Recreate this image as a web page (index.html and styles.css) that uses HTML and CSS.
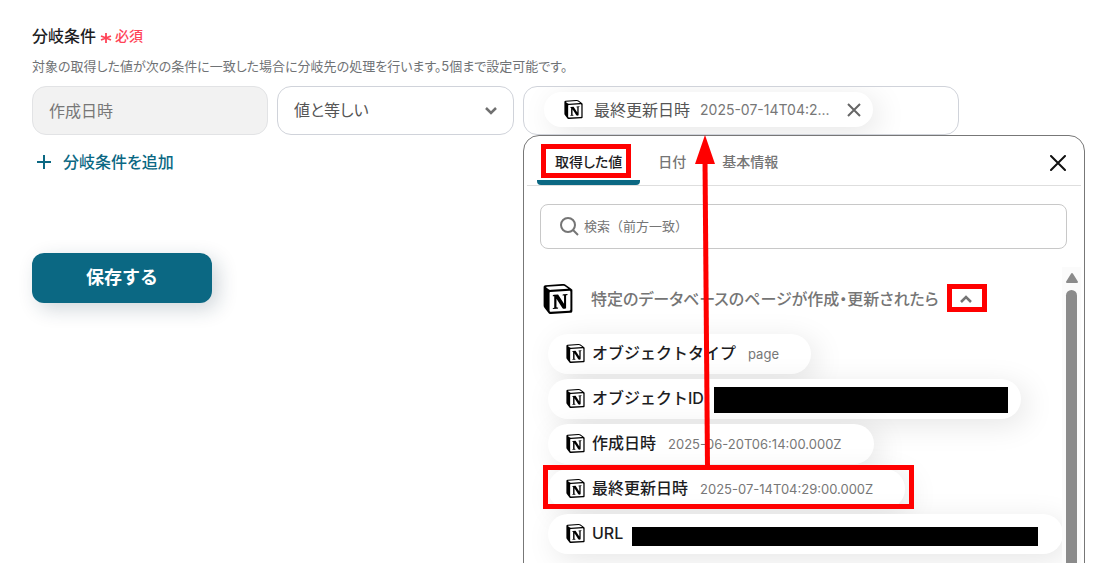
FILE: index.html
```html
<!DOCTYPE html>
<html lang="ja">
<head>
<meta charset="utf-8">
<meta name="viewport" content="width=device-width, initial-scale=1">
<title>分岐条件</title>
<link rel="stylesheet" href="styles.css">
</head>
<body>
<svg class="sprite" aria-hidden="true">
  <symbol id="notion" viewBox="0 0 24 24">
    <path fill="#fff" d="M1 2L17 1l6 4v17L6 23l-5-6z"/>
    <path d="M4.459 4.208c.746.606 1.026.56 2.428.466l13.215-.793c.28 0 .047-.28-.046-.326L17.86 1.968c-.42-.326-.981-.7-2.055-.607L3.01 2.295c-.466.046-.56.28-.374.466zm.793 3.08v13.904c0 .747.373 1.027 1.214.98l14.523-.84c.841-.046.935-.56.935-1.167V6.354c0-.606-.233-.933-.748-.887l-15.177.887c-.56.047-.747.327-.747.933zm14.337.745c.093.42 0 .84-.42.888l-.7.14v10.264c-.608.327-1.168.514-1.635.514-.748 0-.935-.234-1.495-.933l-4.577-7.186v6.952L12.21 19s0 .84-1.168.84l-3.222.186c-.093-.186 0-.653.327-.746l.84-.233V9.854L7.822 9.76c-.094-.42.14-1.026.793-1.073l3.456-.233 4.764 7.279v-6.44l-1.215-.139c-.093-.514.28-.887.747-.933zM1.936 1.035l13.31-.98c1.634-.14 2.055-.047 3.082.7l4.249 2.986c.7.513.934.653.934 1.213v16.378c0 1.026-.373 1.634-1.68 1.726l-15.458.934c-.98.047-1.448-.093-1.962-.747l-3.129-4.06c-.56-.747-.793-1.306-.793-1.96V2.667c0-.839.374-1.54 1.447-1.632z"/>
  </symbol>
</svg>
<main class="page">
  <form class="form">
    <header class="form-head">
      <h1 class="title">分岐条件</h1>
      <span class="required"><svg class="asterisk" viewBox="0 0 12 12" aria-hidden="true"><path d="M6 1v10M1 4l10 4M11 4L1 8"/></svg>必須</span>
    </header>
    <p class="help">対象の取得した値が次の条件に一致した場合に分岐先の処理を行います。5個まで設定可能です。</p>

    <div class="condition">
      <input class="field field-source" type="text" value="作成日時" aria-label="対象の値" disabled>
      <div class="select-wrap">
        <select class="field field-operator" aria-label="条件"><option>値と等しい</option></select>
        <svg class="select-arrow" viewBox="0 0 14 10" aria-hidden="true"><path d="M2 2l5 5 5-5"/></svg>
      </div>
      <div class="value-wrap">
        <div class="field field-value">
          <div class="token">
            <svg class="logo"><use href="#notion"/></svg>
            <span class="token-name">最終更新日時</span>
            <span class="token-value">2025-07-14T04:2...</span>
            <button class="icon-button token-remove" type="button" aria-label="値を削除"><svg viewBox="0 0 14 14"><path d="M1 1l12 12M13 1L1 13"/></svg></button>
          </div>
        </div>

        <section class="picker" aria-label="値を選択">
          <div class="picker-head">
            <div class="tabs" role="tablist">
              <button class="tab tab-active" type="button" role="tab" aria-selected="true">取得した値</button>
              <button class="tab" type="button" role="tab" aria-selected="false">日付</button>
              <button class="tab" type="button" role="tab" aria-selected="false">基本情報</button>
            </div>
            <button class="icon-button picker-close" type="button" aria-label="閉じる"><svg viewBox="0 0 16 16"><path d="M1 1l14 14M15 1L1 15"/></svg></button>
          </div>
          <label class="search">
            <svg class="search-icon" viewBox="0 0 20 20" aria-hidden="true"><circle cx="9" cy="9" r="7"/><path d="M14 14l5 5"/></svg>
            <input class="search-input" type="text" placeholder="検索（前方一致）" aria-label="検索（前方一致）">
          </label>
          <div class="results">
            <div class="list">
              <div class="group">
                <svg class="logo logo-large"><use href="#notion"/></svg>
                <h2 class="group-name">特定のデータベースのページが作成・更新されたら</h2>
                <button class="icon-button group-toggle" type="button" aria-label="折りたたむ"><svg viewBox="0 0 14 10"><path d="M2 8l5-5 5 5"/></svg></button>
              </div>
              <div class="chips">
                <button class="chip" type="button"><svg class="logo"><use href="#notion"/></svg><span class="chip-name">オブジェクトタイプ</span><span class="chip-value">page</span></button>
                <button class="chip chip-id" type="button"><svg class="logo"><use href="#notion"/></svg><span class="chip-name">オブジェクトID</span><span class="mask mask-id"></span></button>
                <button class="chip" type="button"><svg class="logo"><use href="#notion"/></svg><span class="chip-name">作成日時</span><span class="chip-value">2025-06-20T06:14:00.000Z</span></button>
                <button class="chip" type="button"><svg class="logo"><use href="#notion"/></svg><span class="chip-name">最終更新日時</span><span class="chip-value">2025-07-14T04:29:00.000Z</span></button>
                <button class="chip chip-url" type="button"><svg class="logo"><use href="#notion"/></svg><span class="chip-name">URL</span><span class="mask mask-url"></span></button>
              </div>
            </div>
            <div class="scrollbar" aria-hidden="true">
              <svg class="scroll-up" viewBox="0 0 14 12"><path d="M7 2l5 8H2z"/></svg>
              <div class="thumb"></div>
            </div>
          </div>
        </section>
      </div>
    </div>

    <button class="add" type="button"><svg class="plus" viewBox="0 0 16 16" aria-hidden="true"><path d="M8 1v14M1 8h14"/></svg>分岐条件を追加</button>
    <button class="save" type="submit">保存する</button>
  </form>

  <svg class="annotations" viewBox="0 0 1113 563" aria-hidden="true">
    <g class="frames">
      <path d="M543.5 146.500h85v29h-85z"/>
      <path d="M949.5 286.500h35v23h-35z"/>
      <path d="M545.5 467.500h366v39h-366z"/>
    </g>
    <path class="shaft" d="M705 160L707.500 467"/>
    <path class="head" d="M705 135l10 29h-20z"/>
  </svg>
</main>
</body>
</html>
```
FILE: styles.css
```css
* { box-sizing: border-box; }
body {
  margin: 0;
  background: #fff;
  color: #1d1d1f;
  font-family: Inter, "Noto Sans CJK JP", sans-serif;
  font-size: 16px;
  line-height: 24px;
  font-feature-settings: "palt";
}
h1, h2, p { margin: 0; }
button, input, select {
  font: inherit;
  font-feature-settings: inherit;
  color: inherit;
}
button { padding: 0; border: 0; background: none; cursor: pointer; }
svg { display: block; flex: none; fill: none; }
.sprite { position: absolute; width: 0; height: 0; }
.page {
  position: relative;
  min-height: 100vh;
  padding: 24px 32px;
  overflow: hidden;
}
.form { max-width: 927px; }
.form-head { display: flex; align-items: center; gap: 4px; }
.title { font-size: 16px; font-weight: 500; }
.required {
  display: flex;
  align-items: center;
  gap: 3px;
  color: #ff4458;
  font-size: 14px;
  font-weight: 500;
}
.asterisk { width: 12px; height: 12px; margin-top: 4px; stroke: currentColor; stroke-width: 1.800; }
.help { margin-top: 8px; color: #6f7275; font-size: 13px; line-height: 20px; }

.condition {
  display: grid;
  grid-template-columns: 236fr 237fr 436fr;
  gap: 9px;
  margin-top: 10px;
}
.field {
  width: 100%;
  height: 49px;
  padding: 0 16px 2px;
  border: 1px solid #d0d3da;
  border-radius: 14px;
  background: #fff;
  color: #555;
}
.field-source { border-color: #e2e3e5; background: #f2f2f2; color: #777; }
.select-wrap, .value-wrap { position: relative; }
.field-operator { appearance: none; }
.select-arrow {
  position: absolute;
  top: 20px;
  right: 16px;
  width: 14px;
  height: 10px;
  stroke: #707070;
  stroke-width: 2.500;
  pointer-events: none;
}
.field-value { display: flex; align-items: center; padding: 0 20px 2px; overflow: hidden; }
.token {
  display: flex;
  align-items: center;
  height: 35px;
  padding: 0 12px 0 20px;
  border-radius: 18px;
  background: #fff;
  box-shadow: 6px 6px 30px rgba(0, 0, 0, .1);
}
.logo { width: 19px; height: 19px; fill: #000; }
.token-name { margin-left: 11px; }
.token-value { margin-left: 10px; color: #777; font-size: 14px; }
.icon-button { display: grid; place-items: center; }
.token-remove { margin-left: 17px; }
.token-remove svg { width: 14px; height: 14px; stroke: #666; stroke-width: 2; }

.picker {
  position: absolute;
  top: 49px;
  left: 0;
  width: 562px;
  height: 480px;
  padding: 0 3px;
  border: 1px solid #777;
  border-radius: 16px;
  background: #fff;
}
.picker-head {
  display: flex;
  align-items: center;
  justify-content: space-between;
  height: 50px;
  padding: 0 15px 0 10px;
  border-bottom: 1px solid #dedede;
}
.tabs { display: flex; height: 49px; }
.tab {
  padding: 8px 18px 0;
  border-bottom: 5px solid transparent;
  color: #757575;
  font-size: 14px;
  font-weight: 500;
}
.tab-active {
  color: #1d1d1f;
  background: linear-gradient(#0b6883, #0b6883) bottom / 100% 5px no-repeat border-box;
  border-radius: 4px;
}
.picker-close { margin-top: 4px; }
.picker-close svg { width: 16px; height: 16px; stroke: #111; stroke-width: 2; stroke-linecap: round; }
.search {
  display: flex;
  align-items: center;
  gap: 5px;
  height: 45px;
  margin: 18px 14px 0 13px;
  padding: 0 18px 2px;
  border: 1px solid #c8c8c8;
  border-radius: 8px;
}
.search-icon { width: 20px; height: 20px; stroke: #757575; stroke-width: 2; }
.search-input {
  flex: 1;
  min-width: 0;
  padding: 0;
  border: 0;
  outline: 0;
  font-size: 13px;
  font-feature-settings: normal;
}
.search-input::placeholder { color: #757575; }
.results { display: flex; height: 310px; margin-top: 18px; overflow: hidden; }
.list { flex: 1; min-width: 0; padding: 16px 0 0 16px; overflow: hidden; }
.group { display: flex; align-items: center; height: 32px; }
.logo-large { width: 30px; height: 30px; }
.group-name { margin-left: 18px; color: #757575; font-size: 16px; font-weight: 500; white-space: nowrap; }
.group-toggle { margin-left: 20px; }
.group-toggle svg { width: 14px; height: 10px; stroke: #757575; stroke-width: 2.500; }
.chips { display: flex; flex-direction: column; align-items: flex-start; gap: 5px; margin: 19px 0 0 5px; }
.chip {
  display: flex;
  flex: none;
  align-items: center;
  height: 40px;
  padding: 0 32px 2px 18px;
  border-radius: 20px;
  background: #fff;
  box-shadow: 6px 6px 30px rgba(0, 0, 0, .1);
  font-feature-settings: normal;
  white-space: nowrap;
}
.chip-name { margin-left: 7px; font-weight: 500; }
.chip-value { margin: 2px 0 0 12px; color: #777; font-size: 13px; }
.chip-id { padding-right: 13px; }
.chip-url { padding-right: 25px; }
.mask { background: #000; }
.mask-id { width: 294px; height: 26px; margin: 4px 0 0 10px; }
.mask-url { width: 406px; height: 19px; margin: 7px 0 0 9px; }
.scrollbar {
  display: flex;
  flex-direction: column;
  align-items: center;
  width: 19px;
  padding-top: 5px;
  background: #fbfbfb;
}
.scroll-up { width: 14px; height: 12px; fill: #8b8b8b; stroke: #8b8b8b; stroke-width: 2; stroke-linejoin: round; }
.thumb { flex: 1; width: 11px; margin-top: 6px; border-radius: 6px 6px 0 0; background: #8b8b8b; }

.add {
  display: flex;
  align-items: center;
  gap: 11px;
  margin: 15px 0 0 4px;
  color: #0b6883;
  font-weight: 500;
}
.plus { width: 16px; height: 16px; stroke: currentColor; stroke-width: 2; }
.save {
  width: 180px;
  height: 50px;
  margin-top: 79px;
  border-radius: 12px;
  background: #0b6883;
  color: #fff;
  font-size: 18px;
  font-weight: 700;
  font-feature-settings: normal;
  box-shadow: 6px 6px 20px rgba(20, 50, 70, .2);
}
.annotations { position: absolute; top: 0; left: 0; width: 1113px; height: 563px; pointer-events: none; }
.frames { stroke: #f00; stroke-width: 5; }
.shaft { stroke: #f00; stroke-width: 5; }
.head { fill: #f00; }
```
